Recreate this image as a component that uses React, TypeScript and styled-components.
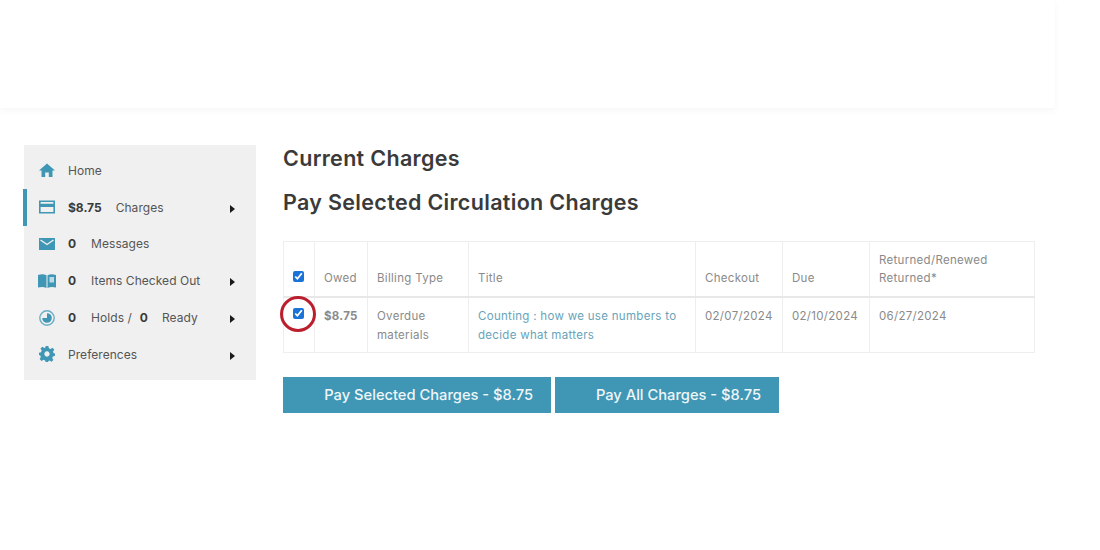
import styled, { createGlobalStyle } from 'styled-components';
import { ReactNode } from 'react';

const GlobalStyle = createGlobalStyle`
  html, body {
    margin: 0;
    padding: 0;
    background: #fff;
    font-family: Inter, "Liberation Sans", sans-serif;
  }
  * { box-sizing: border-box; }
`;

const teal = '#4096b5';

const HomeIcon = () => (
  <svg width="16" height="14" viewBox="0 0 16 14">
    <path d="M8 0.5 L16 7.5 H13.5 V14 H9.8 V9.5 H6.2 V14 H2.5 V7.5 H0 Z" fill={teal} />
  </svg>
);
const CardIcon = () => (
  <svg width="16" height="14" viewBox="0 0 16 14">
    <path fillRule="evenodd" d="M0 0.5 H16 V13.5 H0 Z M1.6 2 V3.8 H14.4 V2 Z M1.6 7 V12 H14.4 V7 Z" fill={teal} />
  </svg>
);
const MailIcon = () => (
  <svg width="16" height="12" viewBox="0 0 16 12">
    <rect width="16" height="12" fill={teal} />
    <path d="M1.5 2 L8 6.5 L14.5 2" fill="none" stroke="#f0f0f0" strokeWidth="1.4" />
  </svg>
);
const BookIcon = () => (
  <svg width="18" height="14" viewBox="0 0 18 14">
    <path d="M0 1 C3 0 6 0 8.5 1.2 V14 C6 12.8 3 12.8 0 13.6 Z" fill={teal} />
    <path d="M9.5 1.2 C12 0 15 0 18 1 V13.6 C15 12.8 12 12.8 9.5 14 Z" fill={teal} />
    <rect x="11.5" y="3" width="4.5" height="5.5" fill="#bcd9e4" />
  </svg>
);
const ClockIcon = () => (
  <svg width="16" height="16" viewBox="0 0 16 16">
    <circle cx="8" cy="8" r="7.2" fill="none" stroke="#6aaec6" strokeWidth="1.4" />
    <path d="M8 3.2 A4.8 4.8 0 1 1 3.2 8 H8 Z" fill={teal} />
  </svg>
);
const GearIcon = () => (
  <svg width="16" height="16" viewBox="0 0 24 24">
    <path
      fillRule="evenodd"
      fill={teal}
      d="M10 0 H14 L14.8 3.4 L17.3 4.4 L20.3 2.6 L23 5.5 L21 8.4 L22 10.8 L24 11.2 V14.8 L20.8 15.6 L19.8 18 L21.6 21 L18.8 23.6 L15.8 21.8 L14 22.4 L14 24 H10 L9.2 21.6 L6.8 20.6 L3.8 22.4 L1 19.6 L2.8 16.6 L1.8 14.2 L0 13.6 V10 L3 9.2 L4 6.8 L2.2 3.8 L5 1.2 L8 3 L9.6 2.4 Z M12 8 A4 4 0 1 0 12.01 8 Z"
    />
  </svg>
);

const Page = styled.div`
  width: 1100px;
  height: 550px;
  overflow: hidden;
  background: #fff;
`;
const Header = styled.header`
  width: 1055px;
  height: 108px;
  box-shadow: 0 3px 7px rgba(0, 0, 0, 0.035);
`;
const Content = styled.div`
  display: flex;
  align-items: flex-start;
  padding: 37px 0 0 24px;
`;
const Sidebar = styled.nav`
  width: 232px;
  flex: none;
  padding: 7px 0 7px;
  background: #f0f0f0;
`;
const NavRow = styled.div<{ $active?: boolean }>`
  position: relative;
  display: flex;
  align-items: center;
  height: 36.8px;
  padding-left: 14px;
  font-size: 12px;
  color: #555;
  ${(p) =>
    p.$active &&
    `&::before {
      content: '';
      position: absolute;
      left: -1px;
      top: 0;
      bottom: 0;
      width: 4px;
      background: ${teal};
    }`}
`;
const IconSlot = styled.span`
  display: flex;
  justify-content: center;
  align-items: center;
  width: 18px;
  margin-right: 12px;
`;
const Count = styled.b<{ $gap?: number }>`
  font-weight: 700;
  color: #3a3a3a;
  margin-right: ${(p) => p.$gap ?? 14}px;
`;
const Label = styled.span<{ $gap?: number }>`
  margin-right: ${(p) => p.$gap ?? 0}px;
  white-space: nowrap;
  letter-spacing: 0.05px;
`;
const Arrow = styled.span`
  position: absolute;
  left: 206px;
  top: 16px;
  width: 0;
  height: 0;
  border-left: 5px solid #1a1a1a;
  border-top: 4px solid transparent;
  border-bottom: 4px solid transparent;
`;
const Main = styled.main`
  margin-left: 27px;
  width: 751px;
`;
const Heading = styled.h2<{ $bottom: number }>`
  margin: 0 0 ${(p) => p.$bottom}px;
  font-size: 21.5px;
  line-height: 27px;
  font-weight: 600;
  letter-spacing: 0.32px;
  color: #3a3a3a;
`;
const TableWrap = styled.div`
  position: relative;
`;
const Table = styled.table`
  width: 751px;
  table-layout: fixed;
  border-collapse: collapse;
  font-size: 11.5px;
  letter-spacing: 0.3px;
  color: #8a8a8a;
`;
const HeadCell = styled.th<{ $w: number }>`
  width: ${(p) => p.$w}px;
  height: 55px;
  padding: 0 0 9px 9px;
  border: 1px solid #eeeeee;
  border-bottom: 2px solid #e8e8e8;
  font-weight: 400;
  text-align: left;
  vertical-align: bottom;
  line-height: 18px;
`;
const Cell = styled.td<{ $strong?: boolean; $link?: boolean }>`
  height: 56px;
  padding: 9px 9px 0;
  border: 1px solid #eeeeee;
  vertical-align: top;
  line-height: 19px;
  font-weight: ${(p) => (p.$strong ? 700 : 400)};
  color: ${(p) => (p.$link ? '#68a3b9' : '#8a8a8a')};
`;
const Check = styled.input.attrs({ type: 'checkbox', readOnly: true, checked: true })`
  display: block;
  width: 11px;
  height: 11px;
  margin: 0;
  accent-color: #1a73d9;
`;
const CheckHead = styled(HeadCell)`
  padding: 0 0 14px 9px;
`;
const CheckCell = styled(Cell)`
  padding: 10px 0 0 9px;
`;
const Circle = styled.span`
  position: absolute;
  left: -3px;
  top: 55px;
  width: 36px;
  height: 36px;
  border: 3px solid #bb1f2e;
  border-radius: 50%;
  pointer-events: none;
`;
const Actions = styled.div`
  display: flex;
  gap: 4px;
  margin-top: 24px;
`;
const PayButton = styled.button<{ $w: number }>`
  width: ${(p) => p.$w}px;
  height: 36px;
  padding: 0 18px 0 0;
  border: none;
  background: ${teal};
  color: #eef6f9;
  font: 500 14.7px Inter, "Liberation Sans", sans-serif;
  text-align: right;
`;

const Nav = ({ icon, active, arrow, children }: { icon: ReactNode; active?: boolean; arrow?: boolean; children: ReactNode }) => (
  <NavRow $active={active}>
    <IconSlot>{icon}</IconSlot>
    {children}
    {arrow && <Arrow />}
  </NavRow>
);

export default function App() {
  return (
    <Page>
      <GlobalStyle />
      <Header />
      <Content>
        <Sidebar>
          <Nav icon={<HomeIcon />}><Label>Home</Label></Nav>
          <Nav icon={<CardIcon />} active arrow><Count>$8.75</Count><Label>Charges</Label></Nav>
          <Nav icon={<MailIcon />}><Count $gap={15}>0</Count><Label>Messages</Label></Nav>
          <Nav icon={<BookIcon />} arrow><Count $gap={15}>0</Count><Label>Items Checked Out</Label></Nav>
          <Nav icon={<ClockIcon />} arrow><Count $gap={15}>0</Count><Label $gap={8}>Holds /</Label><Count $gap={14}>0</Count><Label>Ready</Label></Nav>
          <Nav icon={<GearIcon />} arrow><Label>Preferences</Label></Nav>
        </Sidebar>
        <Main>
          <Heading $bottom={17}>Current Charges</Heading>
          <Heading $bottom={25}>Pay Selected Circulation Charges</Heading>
          <TableWrap>
            <Table>
              <thead>
                <tr>
                  <CheckHead $w={31}><Check /></CheckHead>
                  <HeadCell $w={53}>Owed</HeadCell>
                  <HeadCell $w={101}>Billing Type</HeadCell>
                  <HeadCell $w={227}>Title</HeadCell>
                  <HeadCell $w={87}>Checkout</HeadCell>
                  <HeadCell $w={87}>Due</HeadCell>
                  <HeadCell $w={165}>Returned/Renewed<br />Returned*</HeadCell>
                </tr>
              </thead>
              <tbody>
                <tr>
                  <CheckCell><Check /></CheckCell>
                  <Cell $strong>$8.75</Cell>
                  <Cell>Overdue materials</Cell>
                  <Cell $link>Counting : how we use numbers to decide what matters</Cell>
                  <Cell>02/07/2024</Cell>
                  <Cell>02/10/2024</Cell>
                  <Cell>06/27/2024</Cell>
                </tr>
              </tbody>
            </Table>
            <Circle />
          </TableWrap>
          <Actions>
            <PayButton $w={268}>Pay Selected Charges - $8.75</PayButton>
            <PayButton $w={224}>Pay All Charges - $8.75</PayButton>
          </Actions>
        </Main>
      </Content>
    </Page>
  );
}
